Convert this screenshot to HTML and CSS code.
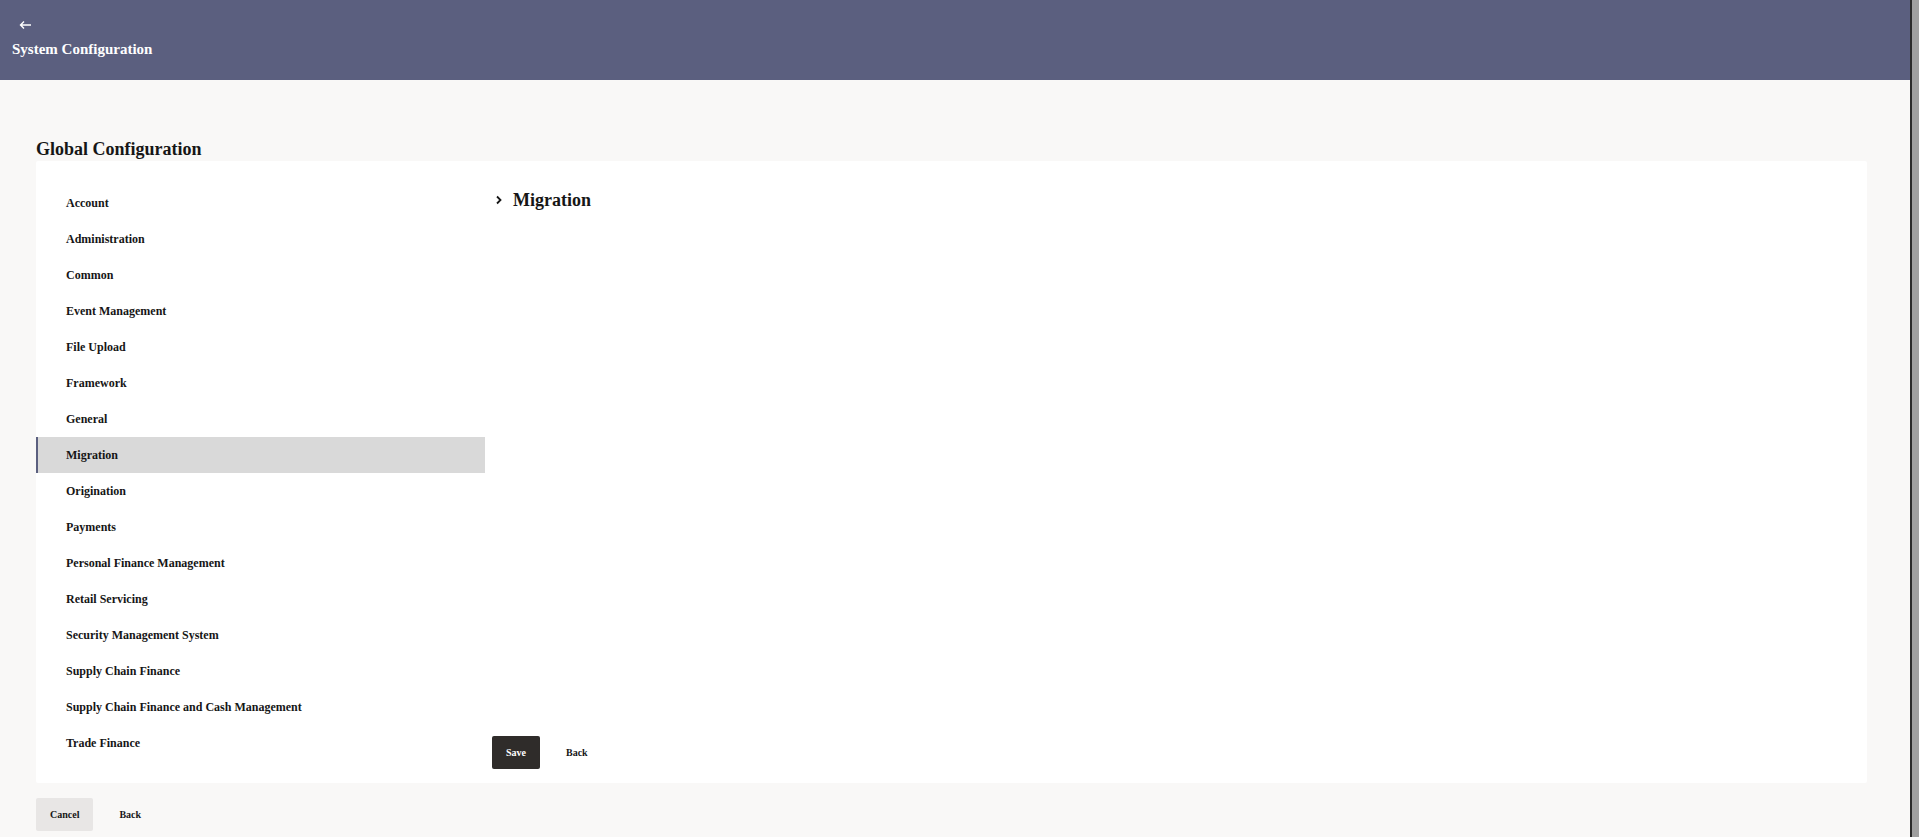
FILE: index.html
```html
<!DOCTYPE html>
<html>

<head>
  <meta http-equiv="Content-Type" content="text/html; charset=UTF-8">
  <title>System Configuration</title>
  <link rel="stylesheet" href="styles.css">
</head>

<body>

  <div id="pagina">

    <div id="cabecera">
      <a class="volver" href="#">
        <svg width="13" height="10" viewBox="0 0 13 10">
          <path d="M12 5H1.5M5 1.5L1.5 5L5 8.5" fill="none" stroke="#fff" stroke-width="1.4" />
        </svg>
      </a>
      <div class="titulo_cab">System Configuration</div>
    </div>

    <div id="contenido">
      <h1>Global Configuration</h1>

      <div id="tarjeta">
        <ul id="menu">
          <li>Account</li>
          <li>Administration</li>
          <li>Common</li>
          <li>Event Management</li>
          <li>File Upload</li>
          <li>Framework</li>
          <li>General</li>
          <li class="activo">Migration</li>
          <li>Origination</li>
          <li>Payments</li>
          <li>Personal Finance Management</li>
          <li>Retail Servicing</li>
          <li>Security Management System</li>
          <li>Supply Chain Finance</li>
          <li>Supply Chain Finance and Cash Management</li>
          <li>Trade Finance</li>
        </ul>

        <div id="detalle">
          <h2>
            <svg width="8" height="10" viewBox="0 0 8 10">
              <path d="M2 1.5L5.5 5L2 8.5" fill="none" stroke="#161616" stroke-width="1.8" />
            </svg>
            Migration
          </h2>

          <div class="botones">
            <button class="bt bt_oscuro">Save</button>
            <button class="bt">Back</button>
          </div>
        </div>
      </div>

      <div class="botones pie">
        <button class="bt bt_gris">Cancel</button>
        <button class="bt">Back</button>
      </div>
    </div>

  </div>

  <div id="borde"></div>

</body>

</html>
```

FILE: styles.css
```css
html,
body {
  height: 100%;
}

body {
  margin: 0;
  display: flex;
  background: #f9f8f7;
  font-family: "Liberation Serif", "Times New Roman", serif;
  color: #161616;
  overflow: hidden;
}

#pagina {
  flex: 1;
  min-width: 0;
}

#borde {
  width: 7px;
  border-left: 2px solid #2b2b2b;
  background: #a0a0a0;
}

/* cabecera */

#cabecera {
  height: 80px;
  box-sizing: border-box;
  background: #5b5f7f;
  padding: 20px 12px 0;
  color: #fff;
}

.volver {
  display: block;
  width: 13px;
  height: 10px;
  margin-left: 7px;
}

.volver svg {
  display: block;
}

.titulo_cab {
  margin-top: 10px;
  font-size: 15px;
  font-weight: bold;
  line-height: 18px;
}

/* contenido */

#contenido {
  padding: 0 43px 0 36px;
}

h1 {
  margin: 0;
  padding-top: 58px;
  margin-bottom: 1px;
  font-size: 18px;
  line-height: 22px;
}

#tarjeta {
  display: flex;
  background: #fff;
  border-radius: 2px;
  padding: 24px 0 14px;
}

#menu {
  list-style: none;
  margin: 0;
  padding: 0 0 8px;
  width: 449px;
}

#menu li {
  height: 36px;
  line-height: 36px;
  padding-left: 28px;
  border-left: 2px solid transparent;
  font-size: 12px;
  font-weight: bold;
}

#menu li.activo {
  background: #d9d9d9;
  border-left-color: #5b5f7f;
}

#detalle {
  flex: 1;
  display: flex;
  flex-direction: column;
  padding-left: 7px;
}

h2 {
  margin: 0;
  display: flex;
  align-items: center;
  gap: 10px;
  padding-left: 3px;
  font-size: 18px;
  line-height: 30px;
}

#detalle .botones {
  margin-top: auto;
}

/* botones */

.botones {
  display: flex;
  gap: 12px;
}

.pie {
  margin-top: 15px;
}

.bt {
  height: 33px;
  padding: 0 14px;
  border: none;
  border-radius: 2px;
  background: transparent;
  font-family: inherit;
  font-size: 10px;
  font-weight: bold;
  color: #161616;
}

.bt_oscuro {
  background: #2f2c2a;
  color: #fff;
}

.bt_gris {
  background: #e8e6e5;
}
```
